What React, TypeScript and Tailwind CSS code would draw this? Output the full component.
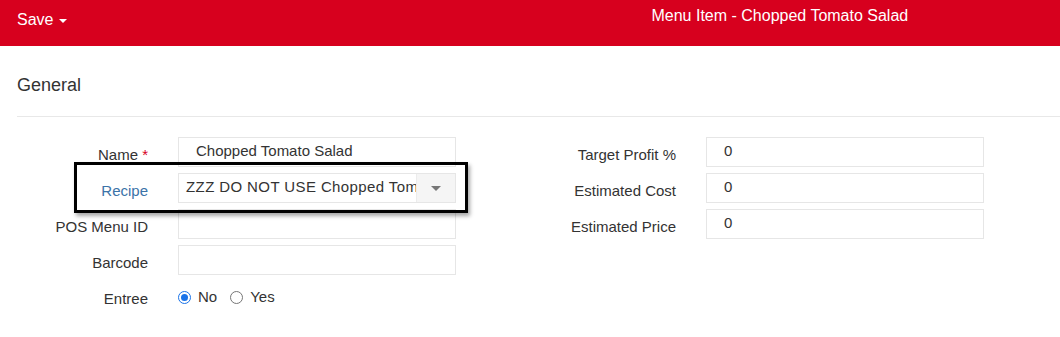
import React from "react";

const font = { fontFamily: '"Liberation Sans", Arial, sans-serif' };

function Label({ children, className = "" }: { children: React.ReactNode; className?: string }) {
  return <div className={`h-[30px] pt-[9px] text-right text-[15px] leading-[18px] whitespace-nowrap ${className}`}>{children}</div>;
}

function Input({ value = "" }: { value?: string }) {
  return (
    <div className="w-[278px] h-[30px] border border-[#e6e6e6] bg-white pl-[17px] text-[15px] leading-[26px] text-[#333]">
      {value}
    </div>
  );
}

function Radio({ checked, className = "" }: { checked?: boolean; className?: string }) {
  return checked ? (
    <div className={`shrink-0 w-[13px] h-[13px] rounded-full border border-[#1a73e8] flex items-center justify-center bg-white ${className}`}>
      <div className="w-[7px] h-[7px] rounded-full bg-[#1a73e8]" />
    </div>
  ) : (
    <div className={`shrink-0 w-[13px] h-[13px] rounded-full border border-[#767676] bg-white ${className}`} />
  );
}

export default function App() {
  return (
    <div className="w-[1060px] h-[337px] bg-white text-[#333] overflow-hidden" style={font}>
      <div className="h-[46px] bg-[#d7001e] flex text-white">
        <div className="pl-[17px] pt-[10px] text-[16px] flex items-start gap-[6px]">
          <span className="leading-[20px]">Save</span>
          <span className="mt-[9px] w-0 h-0 border-l-[4px] border-r-[4px] border-t-[4px] border-l-transparent border-r-transparent border-t-white" />
        </div>
        <div className="ml-[584px] pt-[6px] text-[16px] leading-[20px]">Menu Item - Chopped Tomato Salad</div>
      </div>

      <div className="pl-[17px] pt-[28px] text-[18px] leading-[22px] text-[#333]">General</div>
      <div className="ml-[17px] mt-[20px] border-t border-[#e8e8e8]" />

      <div className="mt-[20px] flex">
        <div className="flex flex-col gap-[6px]">
          <div className="flex gap-[30px]">
            <Label className="w-[148px]">
              Name <span className="text-[#d7001e]">*</span>
            </Label>
            <Input value="Chopped Tomato Salad" />
          </div>
          <div className="flex gap-[30px] relative">
            <Label className="w-[148px] text-[#3b73a8]">Recipe</Label>
            <div className="w-[278px] h-[30px] border border-[#e6e6e6] bg-white flex text-[15px] text-[#333]">
              <div className="w-[237px] pl-[7px] leading-[26px] tracking-[0.4px] overflow-hidden whitespace-nowrap">ZZZ DO NOT USE Chopped Tomato Salad</div>
              <div className="flex-1 bg-[#f5f5f5] border-l border-[#ececec] flex items-center justify-center">
                <span className="w-0 h-0 border-l-[5px] border-r-[5px] border-t-[5px] border-l-transparent border-r-transparent border-t-[#777]" />
              </div>
            </div>
            <div className="absolute left-[74px] top-[-11px] w-[394px] h-[51px] border-[3px] border-black shadow-[2px_3px_4px_rgba(0,0,0,0.35)] pointer-events-none" />
          </div>
          <div className="flex gap-[30px]">
            <Label className="w-[148px]">POS Menu ID</Label>
            <Input />
          </div>
          <div className="flex gap-[30px]">
            <Label className="w-[148px]">Barcode</Label>
            <Input />
          </div>
          <div className="flex gap-[30px]">
            <Label className="w-[148px]">Entree</Label>
            <div className="h-[30px] pt-[2px] flex items-center text-[15px]">
              <Radio checked />
              <span className="ml-[7px]">No</span>
              <Radio className="ml-[13px]" />
              <span className="ml-[7px]">Yes</span>
            </div>
          </div>
        </div>

        <div className="flex flex-col gap-[6px]">
          <div className="flex gap-[30px]">
            <Label className="w-[220px]">Target Profit %</Label>
            <Input value="0" />
          </div>
          <div className="flex gap-[30px]">
            <Label className="w-[220px]">Estimated Cost</Label>
            <Input value="0" />
          </div>
          <div className="flex gap-[30px]">
            <Label className="w-[220px]">Estimated Price</Label>
            <Input value="0" />
          </div>
        </div>
      </div>
    </div>
  );
}
